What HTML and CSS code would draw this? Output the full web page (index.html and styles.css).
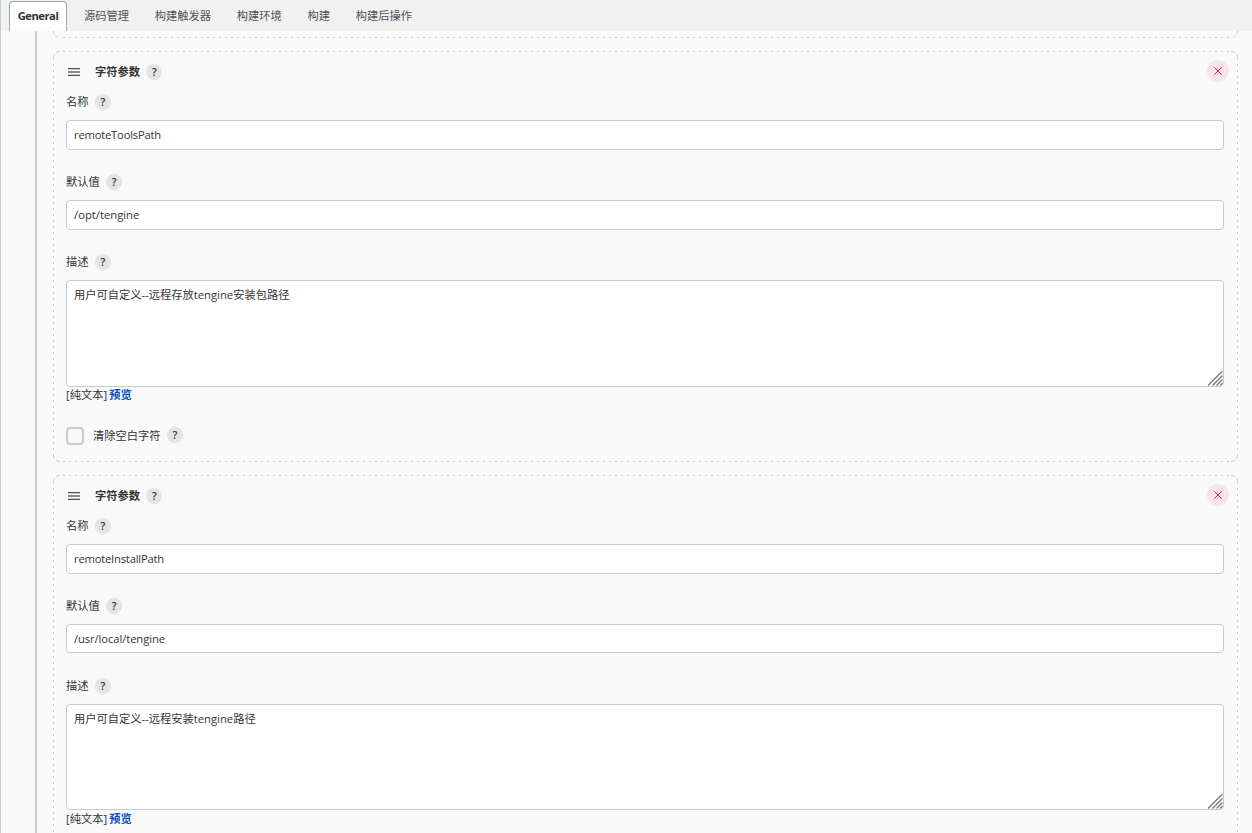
FILE: index.html
```html
<!DOCTYPE html>
<html lang="zh-CN">
<head>
<meta charset="utf-8">
<title>General</title>
<link rel="stylesheet" href="styles.css">
</head>
<body>
<nav class="tabs">
  <a class="tab active">General</a><a class="tab">源码管理</a><a class="tab">构建触发器</a><a class="tab">构建环境</a><a class="tab">构建</a><a class="tab">构建后操作</a>
</nav>
<main class="content">
  <section class="card previous">
    <svg class="outline" width="1185" height="7" fill="none" stroke="#c9cdd0"><path d="M.5 0A6 6 0 0 0 7 6.5M1184.5 0A6 6 0 0 1 1178 6.5" stroke-dasharray="3 2"/><path d="M10 6.5H1178" stroke-dasharray="2 4"/></svg>
  </section>
  <section class="card">
    <svg class="outline" width="1185" height="411" fill="none" stroke="#c9cdd0"><path d="M.5 7A6.5 6.5 0 0 1 7 .5M1178 .5A6.5 6.5 0 0 1 1184.5 7M.5 404A6.5 6.5 0 0 0 7 410.5M1178 410.5A6.5 6.5 0 0 0 1184.5 404" stroke-dasharray="4 2"/><path d="M10 .5H1178M10 410.5H1178M.5 7V404M1184.5 7V404" stroke-dasharray="2 4"/></svg>
    <header class="card-head"><svg class="grip" width="12" height="8"><path d="M0 .5h12M0 7.5h12" stroke="#555"/><path d="M0 1.5h12M0 6.5h12" stroke="#ccc"/><path d="M0 4h12" stroke="#8a8a8a" stroke-width="2"/></svg><b>字符参数</b><span class="help">?</span><button class="remove"><svg width="8" height="8"><path d="M.3.3l7.4 7.4M7.7.3L.3 7.7" stroke="#d3273e"/></svg></button></header>
    <div class="label">名称<span class="help">?</span></div>
    <div class="input name">remoteToolsPath</div>
    <div class="label">默认值<span class="help">?</span></div>
    <div class="input">/opt/tengine</div>
    <div class="label">描述<span class="help">?</span></div>
    <div class="input area">用户可自定义--远程存放tengine安装包路径<svg class="resize" width="15" height="15" fill="none" stroke="#777" stroke-width="1.3"><path d="M0 14.5L14.5 0M4.5 14.5L14.5 4.5M8.5 14.5L14.5 8.5M12 14.5L14.5 12"/></svg></div>
    <div class="format raised">[纯文本] <a>预览</a></div>
    <div class="trim"><span class="box"></span>清除空白字符<span class="help">?</span></div>
  </section>
  <section class="card">
    <svg class="outline" width="1185" height="411" fill="none" stroke="#c9cdd0"><path d="M.5 7A6.5 6.5 0 0 1 7 .5M1178 .5A6.5 6.5 0 0 1 1184.5 7" stroke-dasharray="4 2"/><path d="M10 .5H1178M.5 7V411M1184.5 7V411" stroke-dasharray="2 4"/></svg>
    <header class="card-head"><svg class="grip" width="12" height="8"><path d="M0 .5h12M0 7.5h12" stroke="#555"/><path d="M0 1.5h12M0 6.5h12" stroke="#ccc"/><path d="M0 4h12" stroke="#8a8a8a" stroke-width="2"/></svg><b>字符参数</b><span class="help">?</span><button class="remove"><svg width="8" height="8"><path d="M.3.3l7.4 7.4M7.7.3L.3 7.7" stroke="#d3273e"/></svg></button></header>
    <div class="label">名称<span class="help">?</span></div>
    <div class="input name">remoteInstallPath</div>
    <div class="label">默认值<span class="help">?</span></div>
    <div class="input short">/usr/local/tengine</div>
    <div class="label">描述<span class="help">?</span></div>
    <div class="input area low">用户可自定义--远程安装tengine路径<svg class="resize" width="15" height="15" fill="none" stroke="#777" stroke-width="1.3"><path d="M0 14.5L14.5 0M4.5 14.5L14.5 4.5M8.5 14.5L14.5 8.5M12 14.5L14.5 12"/></svg></div>
    <div class="format">[纯文本] <a>预览</a></div>
  </section>
</main>
</body>
</html>
```
FILE: styles.css
```css
* { box-sizing: border-box; }
body {
  margin: 0;
  height: 833px;
  overflow: hidden;
  border-left: 1px solid #c3ccd1;
  background: #f9f9f9;
  color: #333;
  font: 11.25px/18px "Open Sans", "Noto Sans CJK SC", sans-serif;
}
.tabs {
  display: flex;
  height: 31px;
  padding: 1px 0 0 8px;
  background: #f1f1f1;
}
.tab {
  height: 30px;
  padding: 0 8.9px;
  margin-right: 8px;
  line-height: 30px;
  color: #4d545d;
}
.tab.active {
  width: 58px;
  padding: 0;
  text-align: center;
  border: 1px solid #98a6ad;
  border-bottom: 0;
  border-radius: 4px 4px 0 0;
  background: #fff;
  color: #333;
  font-weight: 700;
  letter-spacing: -.5px;
  line-height: 28px;
}
.content {
  height: 802px;
  margin-left: 34px;
  padding-left: 16px;
  border-left: 2px solid #c3ccd1;
  overflow: hidden;
}
.card {
  position: relative;
  width: 1185px;
  height: 411px;
  margin-bottom: 13px;
  padding: 11px 14px 0 13px;
}
.card.previous { height: 7px; padding: 0; }
.outline { position: absolute; top: 0; left: 0; pointer-events: none; }
.card-head { display: flex; align-items: center; height: 20px; margin-bottom: 11px; }
.grip { margin: 0 15.5px 0 1.5px; }
.help {
  flex: none;
  width: 16px;
  height: 16px;
  margin-left: 6.4px;
  border-radius: 50%;
  background: #e4e4e4;
  font-weight: 600;
  font-size: 10.5px;
  line-height: 16px;
  text-align: center;
}
.remove {
  display: flex;
  align-items: center;
  justify-content: center;
  width: 22px;
  height: 22px;
  margin: -2px -5px 0 auto;
  padding: 0;
  border: 0;
  border-radius: 50%;
  background: #f7e5e9;
}
.label { display: flex; align-items: center; height: 18px; margin-bottom: 9px; }
.input {
  position: relative;
  height: 30px;
  margin-bottom: 23px;
  padding: 0 7px;
  border: 1px solid #c3cdd2;
  border-radius: 4px;
  background: #fff;
  line-height: 28px;
}
.input.name { letter-spacing: -.22px; }
.input.short { height: 29px; margin-bottom: 24px; letter-spacing: -.1px; }
.input.area { height: 107px; margin-bottom: 0; }
.input.area.low { height: 106px; }
.resize { position: absolute; right: 0; bottom: 0; }
.format { height: 18px; word-spacing: -.8px; }
.format.raised { line-height: 16px; }
.format a { color: #0b4fb8; font-weight: 700; }
.trim { display: flex; align-items: center; height: 18px; margin-top: 22px; }
.trim .help { margin-top: -2px; }
.box {
  width: 18px;
  height: 18px;
  margin-right: 9px;
  border: 2px solid #c3cdd2;
  border-radius: 4px;
}
```
